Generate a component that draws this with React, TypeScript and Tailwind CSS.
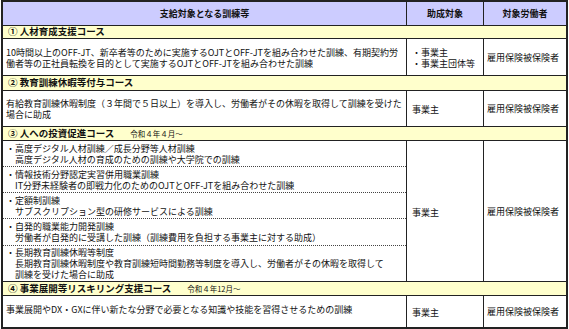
const FONT = "font-['Noto_Sans_CJK_JP','Noto_Sans',sans-serif]";

function SectionBand({ label, note, h }: { label: string; note?: string; h: string }) {
  return (
    <div className={`flex items-center border-b border-[#222] bg-[#ffffcc] pl-[5px] ${h}`}>
      <span className="text-[9.5px] leading-none font-bold">{label}</span>
      {note && <span className="ml-[16px] text-[7.5px] leading-none">{note}</span>}
    </div>
  );
}

function Payer({ children }: { children: React.ReactNode }) {
  return (
    <div className="flex w-[77px] shrink-0 flex-col justify-center border-r border-[#222] pl-[5px] pt-[2px]">
      {children}
    </div>
  );
}

function Worker() {
  return <div className="flex flex-1 items-center pl-[3px]">雇用保険被保険者</div>;
}

function SubItem({ title, lines, h, last }: { title: string; lines: string[]; h: string; last?: boolean }) {
  return (
    <div
      className={`flex flex-col justify-center pl-[3px] ${h} ${
        last ? "" : "border-b border-dotted border-[#444]"
      }`}
    >
      <div>・{title}</div>
      {lines.map((l) => (
        <div key={l} className="pl-[9px]">
          {l}
        </div>
      ))}
    </div>
  );
}

export default function App() {
  return (
    <div className={`h-[329px] w-[569px] bg-white ${FONT} text-[9px] leading-[11px] text-[#111]`}>
      <div className="ml-[1px] w-[567px] border-2 border-[#222]">
        {/* 見出し */}
        <div className="flex h-[24px] border-b border-[#222] bg-[#ccccff] font-bold">
          <div className="flex w-[404px] shrink-0 items-center justify-center border-r border-[#222]">
            支給対象となる訓練等
          </div>
          <div className="flex w-[77px] shrink-0 items-center justify-center border-r border-[#222]">助成対象</div>
          <div className="flex flex-1 items-center justify-center">対象労働者</div>
        </div>

        <SectionBand label="① 人材育成支援コース" h="h-[13px]" />
        <div className="flex h-[37px] border-b border-[#222]">
          <div className="flex w-[404px] shrink-0 flex-col justify-center border-r border-[#222] pl-[3px] pt-[2px] whitespace-nowrap">
            <div>10時間以上のOFF-JT、新卒者等のために実施するOJTとOFF-JTを組み合わせた訓練、有期契約労</div>
            <div>働者等の正社員転換を目的として実施するOJTとOFF-JTを組み合わせた訓練</div>
          </div>
          <Payer>
            <div>・事業主</div>
            <div>・事業主団体等</div>
          </Payer>
          <Worker />
        </div>

        <SectionBand label="② 教育訓練休暇等付与コース" h="h-[15px]" />
        <div className="flex h-[36px] border-b border-[#222]">
          <div className="flex w-[404px] shrink-0 flex-col justify-center border-r border-[#222] pl-[3px] whitespace-nowrap">
            <div>有給教育訓練休暇制度（３年間で５日以上）を導入し、労働者がその休暇を取得して訓練を受けた</div>
            <div>場合に助成</div>
          </div>
          <Payer>
            <div>事業主</div>
          </Payer>
          <Worker />
        </div>

        <SectionBand label="③ 人への投資促進コース" note="令和４年４月～" h="h-[14px]" />
        <div className="flex h-[141px] border-b border-[#222]">
          <div className="flex w-[404px] shrink-0 flex-col border-r border-[#222] whitespace-nowrap">
            <SubItem
              h="h-[26px]"
              title="高度デジタル人材訓練／成長分野等人材訓練"
              lines={["高度デジタル人材の育成のための訓練や大学院での訓練"]}
            />
            <SubItem
              h="h-[26px]"
              title="情報技術分野認定実習併用職業訓練"
              lines={["IT分野未経験者の即戦力化のためのOJTとOFF-JTを組み合わせた訓練"]}
            />
            <SubItem h="h-[26px]" title="定額制訓練" lines={["サブスクリプション型の研修サービスによる訓練"]} />
            <SubItem
              h="h-[27px]"
              title="自発的職業能力開発訓練"
              lines={["労働者が自発的に受講した訓練（訓練費用を負担する事業主に対する助成）"]}
            />
            <SubItem
              h="h-[35px]"
              last
              title="長期教育訓練休暇等制度"
              lines={[
                "長期教育訓練休暇制度や教育訓練短時間勤務等制度を導入し、労働者がその休暇を取得して",
                "訓練を受けた場合に助成",
              ]}
            />
          </div>
          <Payer>
            <div>事業主</div>
          </Payer>
          <Worker />
        </div>

        <SectionBand label="④ 事業展開等リスキリング支援コース" note="令和４年12月～" h="h-[14px]" />
        <div className="flex h-[31px]">
          <div className="flex w-[404px] shrink-0 items-center border-r border-[#222] pb-[5px] pl-[3px] whitespace-nowrap">
            事業展開やDX・GXに伴い新たな分野で必要となる知識や技能を習得させるための訓練
          </div>
          <Payer>
            <div>事業主</div>
          </Payer>
          <Worker />
        </div>
      </div>
    </div>
  );
}
